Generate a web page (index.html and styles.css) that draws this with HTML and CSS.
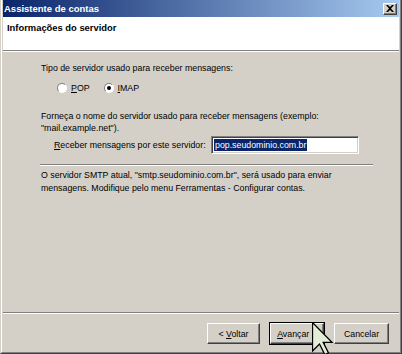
FILE: index.html
```html
<!DOCTYPE html>
<html lang="pt-BR">
<head>
<meta charset="utf-8">
<title>Assistente de contas</title>
<link rel="stylesheet" href="styles.css">
</head>
<body>
<div class="window">
  <div class="frame">
    <div class="titlebar">
      <span class="title">Assistente de contas</span>
      <span class="close"><svg width="8" height="7" viewBox="0 0 8 7"><path d="M0 0h2l2 2 2-2h2L5 3.5 8 7H6L4 5 2 7H0l3-3.5z" fill="#000"/></svg></span>
    </div>
    <div class="header">Informações do servidor</div>
    <div class="content">
      <p class="line first">Tipo de servidor usado para receber mensagens:</p>
      <div class="radios">
        <span class="radio"><span class="rb"></span><span><u>P</u>OP</span></span>
        <span class="radio"><span class="rb checked"></span><span><u>I</u>MAP</span></span>
      </div>
      <p class="para">Forneça o nome do servidor usado para receber mensagens (exemplo:<br>"mail.example.net").</p>
      <div class="field">
        <span class="flabel"><u>R</u>eceber mensagens por este servidor:</span>
        <span class="input"><span class="sel">pop.seudominio.com.br</span></span>
      </div>
      <div class="sep"></div>
      <p class="para smtp">O servidor SMTP atual, "smtp.seudominio.com.br", será usado para enviar<br>mensagens. Modifique pelo menu Ferramentas - Configurar contas.</p>
    </div>
    <div class="footer">
      <span class="btn back"><span>&lt; <u>V</u>oltar</span></span>
      <span class="btn default"><span><u>A</u>vançar &gt;</span></span>
      <span class="btn"><span>Cancelar</span></span>
    </div>
  </div>
  <svg class="cursor" width="22" height="34" viewBox="0 0 22 34"><polygon points="0.5,0.5 0.5,29 7.5,22 12.8,32.6 16.4,30.8 11.2,20.3 20,20.3" fill="#e2ecd6" stroke="#000" stroke-width="1.3" stroke-linejoin="miter"/></svg>
</div>
</body>
</html>
```

FILE: styles.css
```css
* { box-sizing: border-box; }
html, body { margin: 0; padding: 0; background: #d4d0c8; }
body {
  font-family: "Liberation Sans", Arial, sans-serif;
  font-size: 8.8px;
  color: #000;
}
.window {
  position: relative;
  width: 402px;
  height: 354px;
  border-left: 1px solid #d4d0c8;
  border-right: 1px solid #404040;
  border-bottom: 1px solid #404040;
  background: #d4d0c8;
}
.frame {
  height: 100%;
  display: flex;
  flex-direction: column;
  border-left: 1px solid #fff;
  border-right: 1px solid #808080;
  border-bottom: 1px solid #808080;
  padding: 0 1px 1px 1px;
}
.titlebar {
  height: 17px;
  flex: none;
  display: flex;
  align-items: center;
  justify-content: space-between;
  padding: 0 2px 0 1px;
  background: linear-gradient(to right, #0a246a, #a6caf0);
}
.title {
  color: #fff;
  font-weight: bold;
  font-size: 9.5px;
}
.close {
  width: 14px;
  height: 12px;
  display: flex;
  align-items: center;
  justify-content: center;
  background: #d4d0c8;
  border: 1px solid;
  border-color: #fff #404040 #404040 #fff;
  box-shadow: inset -1px -1px #808080;
}
.header {
  height: 34px;
  flex: none;
  background: #fff;
  border-bottom: 1px solid #808080;
  font-weight: bold;
  font-size: 9.4px;
  padding: 5px 0 0 4px;
}
.content {
  flex: 1;
  border-top: 1px solid #fff;
  padding-left: 38px;
}
p { margin: 0; }
.line { line-height: 13px; }
.first { margin-top: 10px; }
.radios {
  display: flex;
  margin-top: 6px;
  padding-left: 16px;
  height: 13px;
  align-items: center;
}
.radio {
  display: flex;
  align-items: center;
  gap: 4px;
  margin-right: 14px;
}
.rb {
  position: relative;
  width: 10px;
  height: 10px;
  border-radius: 50%;
  background: #fff;
  border: 1px solid;
  border-color: #808080 #fff #fff #808080;
}
.rb.checked::after {
  content: "";
  position: absolute;
  left: 2px;
  top: 2px;
  width: 4px;
  height: 4px;
  border-radius: 50%;
  background: #000;
}
.para { line-height: 12px; margin-top: 16px; }
.field {
  display: flex;
  align-items: center;
  margin-top: 2px;
  padding-left: 13px;
}
.flabel { width: 157px; }
.input {
  width: 148px;
  height: 18px;
  background: #fff;
  border: 1px solid;
  border-color: #808080 #fff #fff #808080;
  box-shadow: inset 1px 1px #404040, inset -1px -1px #d4d0c8;
  display: flex;
  align-items: center;
  padding-left: 2px;
}
.sel {
  background: #0a246a;
  color: #fff;
  line-height: 12px;
  padding: 0 1px;
}
.sep {
  width: 333px;
  margin-left: -1px;
  margin-top: 10px;
  border-top: 1px solid #808080;
  border-bottom: 1px solid #fff;
}
.smtp { margin-top: 3px; line-height: 13px; }
.footer {
  height: 39px;
  flex: none;
  border-top: 1px solid #808080;
  box-shadow: inset 0 1px #fff;
  display: flex;
  justify-content: flex-end;
  align-items: flex-start;
  padding: 10px 10px 0 0;
}
.btn {
  width: 55px;
  height: 21px;
  display: flex;
  align-items: center;
  justify-content: center;
  border: 1px solid;
  border-color: #fff #404040 #404040 #fff;
  box-shadow: inset -1px -1px #808080;
  margin-left: 10px;
  white-space: pre;
}
.btn.back { width: 53px; }
.btn.default {
  width: 54px;
  outline: 1px solid #000;
}
.cursor {
  position: absolute;
  left: 311px;
  top: 322px;
}
```
